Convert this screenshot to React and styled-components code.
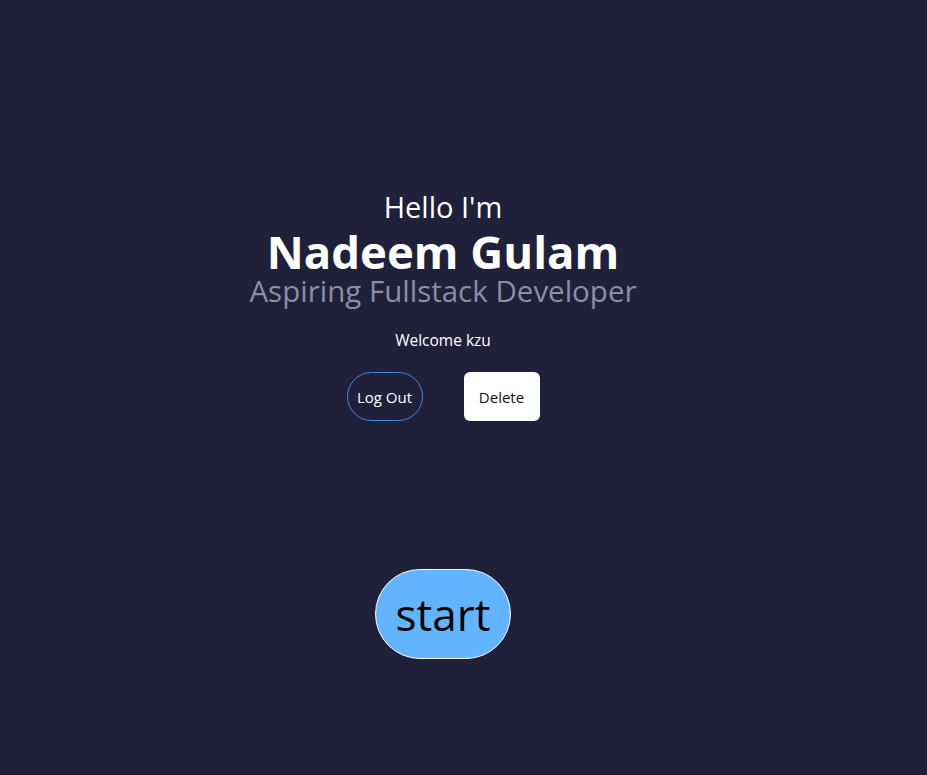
import React from "react";
import styled, { createGlobalStyle } from "styled-components";

const Global = createGlobalStyle`
  html, body { margin: 0; padding: 0; background: #20203a; }
  body { font-family: "Open Sans", "Noto Sans", sans-serif; min-height: 775px; }
`;

const Page = styled.main`
  width: 886px;
  min-height: 775px;
  display: flex;
  flex-direction: column;
  align-items: center;
  padding-top: 190px;
  box-sizing: border-box;
`;

const Hello = styled.div`
  color: #ffffff;
  font-size: 29px;
  line-height: 33px;
`;

const Name = styled.h1`
  margin: 3px 0 0;
  color: #ffffff;
  font-size: 45.5px;
  font-weight: 700;
  line-height: 50px;
`;

const Role = styled.div`
  margin-top: 2px;
  color: #8a8fa3;
  font-size: 29.5px;
  line-height: 26px;
`;

const Welcome = styled.div`
  color: #ffffff;
  font-size: 15.5px;
  margin-top: 26px;
  line-height: 20px;
`;

const Actions = styled.div`
  display: flex;
  gap: 41px;
  margin-top: 22px;
`;

const Btn = styled.button`
  width: 76px;
  height: 49px;
  box-sizing: border-box;
  font-family: inherit;
  font-size: 15px;
  padding: 0;
  cursor: pointer;
  border-radius: ${(p) => (p.$variant === "outline" ? "25px" : "6px")};
  border: ${(p) => (p.$variant === "outline" ? "1px solid #3b8ce0" : "none")};
  background: ${(p) => (p.$variant === "outline" ? "transparent" : "#ffffff")};
  color: ${(p) => (p.$variant === "outline" ? "#ffffff" : "#111111")};
`;

const Start = styled.button`
  margin-top: 148px;
  width: 136px;
  height: 90px;
  box-sizing: border-box;
  border-radius: 45px;
  border: 1px solid #ffffff;
  background: #63b4fe;
  color: #000000;
  font-family: inherit;
  font-size: 44px;
  padding: 0;
  cursor: pointer;
`;

export default function App() {
  return (
    <>
      <Global />
      <Page>
        <Hello>Hello I'm</Hello>
        <Name>Nadeem Gulam</Name>
        <Role>Aspiring Fullstack Developer</Role>
        <Welcome>Welcome kzu</Welcome>
        <Actions>
          <Btn $variant="outline">Log Out</Btn>
          <Btn>Delete</Btn>
        </Actions>
        <Start>start</Start>
      </Page>
    </>
  );
}
